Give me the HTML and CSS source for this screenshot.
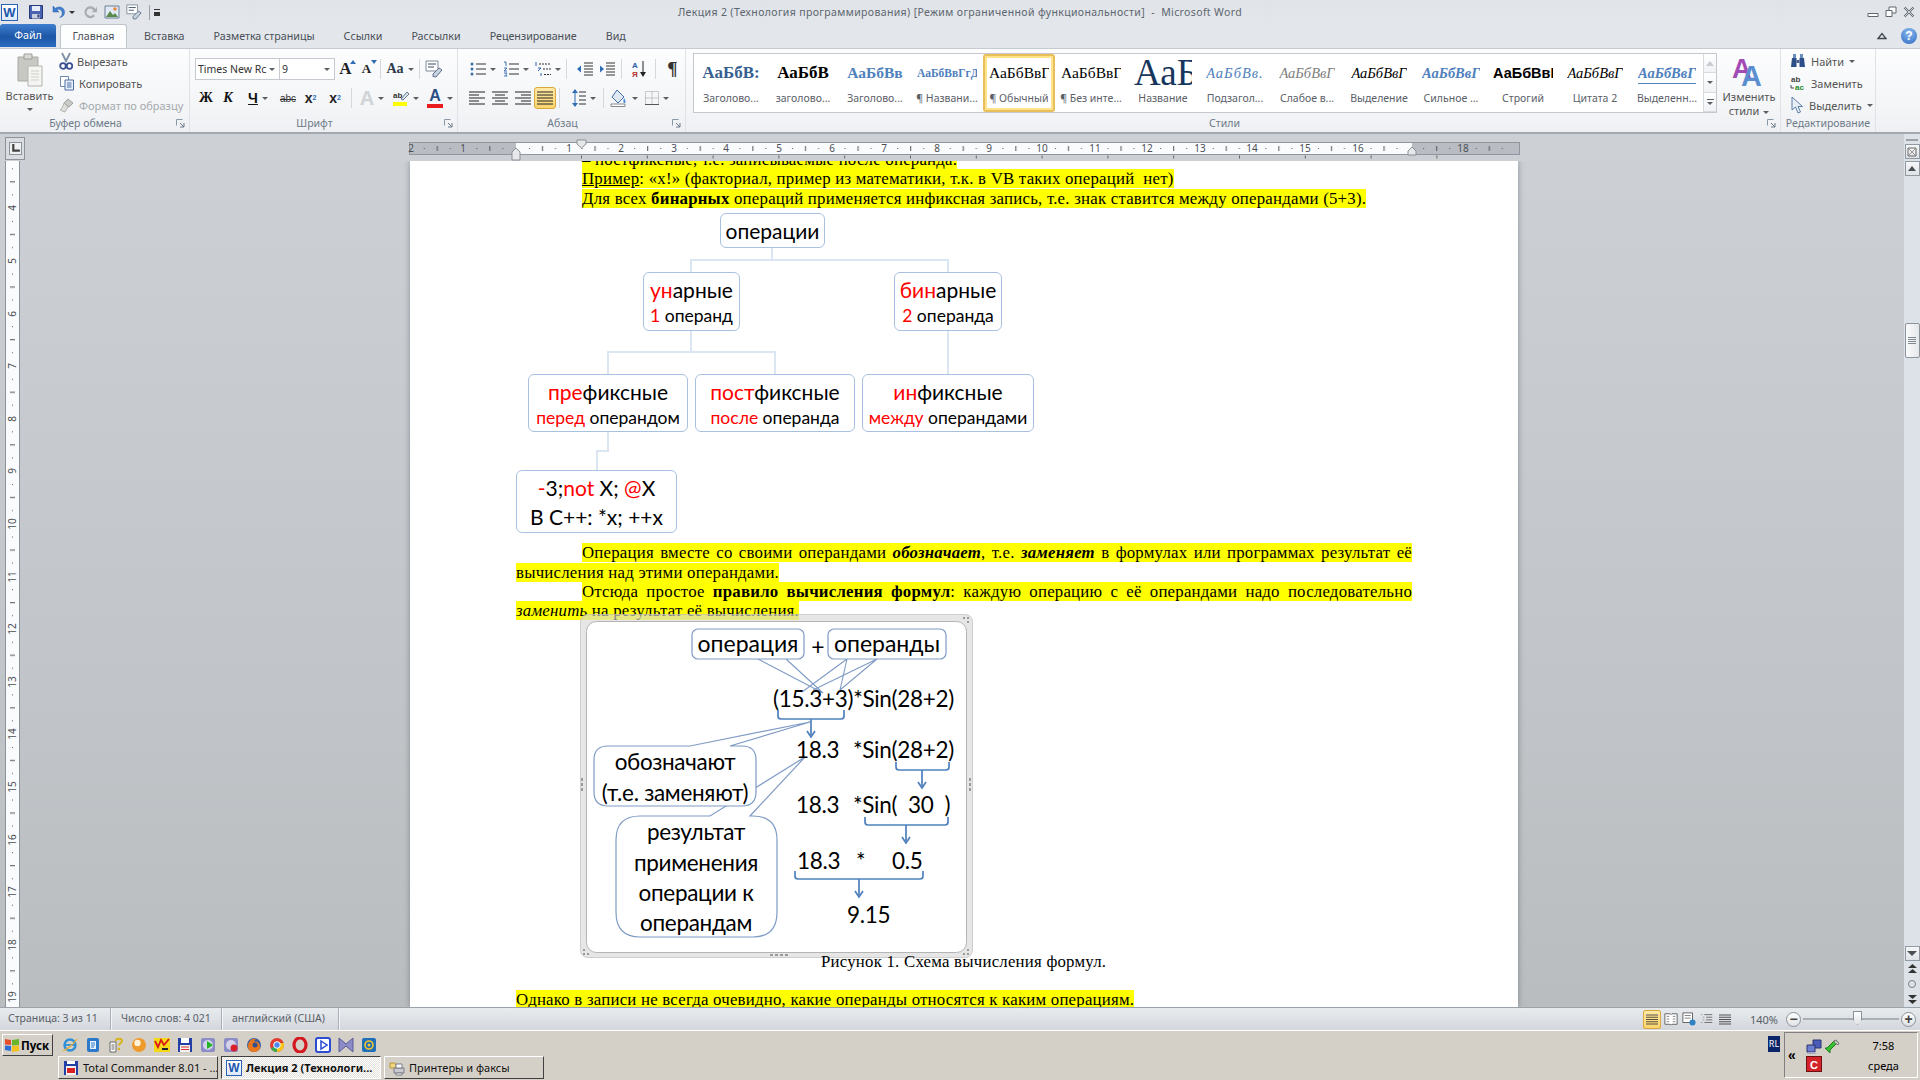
FILE: index.html
```html
<!DOCTYPE html>
<html lang="ru">
<head>
<meta charset="utf-8">
<title>Лекция 2 - Microsoft Word</title>
<link rel="stylesheet" href="styles.css">
</head>
<body>
<svg class="defs" width="0" height="0" aria-hidden="true">
  <defs>
    <symbol id="i-save" viewBox="0 0 16 16"><path d="M1.5 1.5h13v13h-13z" fill="#4a62b0" stroke="#27397c"/><path d="M4 2h8v5H4z" fill="#e8eef8"/><path d="M4 10h8v4.5H4z" fill="#c8cfdc"/><path d="M9.5 10.5h2v3h-2z" fill="#27397c"/></symbol>
    <symbol id="i-undo" viewBox="0 0 16 16"><path d="M3 2v6h6L6.8 5.8C9 4.5 12 5.5 12.2 9c.1 2-1 3.500-2.500 4.500 3.500-.5 5-3 4.800-5.800C14.200 3.500 9.500 1.500 5.300 4.300z" fill="#3f7fd0" stroke="#2a5ea8" stroke-width=".5"/></symbol>
    <symbol id="i-redo" viewBox="0 0 16 16"><path d="M13.500 5A6 6 0 1 0 13 12l-1.800-1.500A3.700 3.700 0 1 1 11.500 6.500L9.500 8.200h5.500V2.500z" fill="#a8adb3"/></symbol>
    <symbol id="i-pic" viewBox="0 0 16 16"><path d="M1 2h14v12H1z" fill="#dfeaf6" stroke="#6d7f96"/><path d="M2 13l4-6 3 4 2-2 3 4z" fill="#5c8a4a"/><circle cx="11" cy="5" r="1.800" fill="#e8893a"/></symbol>
    <symbol id="i-spell" viewBox="0 0 18 18"><path d="M1 1h12v10H1z" fill="#fff" stroke="#7d8a9a"/><path d="M3 4h8M3 7h6" stroke="#3a4a66"/><path d="M8 14l6-6 3 2-6 7-3-.5z" fill="#c9d3e0" stroke="#5e6f88"/></symbol>
    <symbol id="i-paste" viewBox="0 0 28 34"><path d="M2 4h20v24H2z" fill="#c7c7c3" stroke="#a9a9a4"/><path d="M8 1h8v5H8z" fill="#d8d8d4" stroke="#9e9e99"/><path d="M12 13h14v20H12z" fill="#f4f4f2" stroke="#b4b4b0"/><path d="M15 18h8M15 21h8M15 24h8M15 27h8" stroke="#d0cfca"/></symbol>
    <symbol id="i-cut" viewBox="0 0 14 18"><path d="M3 1l4.500 9M11 1L6.500 10" stroke="#7f8fa6" stroke-width="1.800" fill="none"/><circle cx="4" cy="14" r="2.800" fill="none" stroke="#3a4f8f" stroke-width="1.800"/><circle cx="10.500" cy="14" r="2.800" fill="none" stroke="#3a4f8f" stroke-width="1.800"/></symbol>
    <symbol id="i-copy" viewBox="0 0 16 16"><path d="M1.500 1.500h8v10h-8z" fill="#fff" stroke="#6f89ad"/><path d="M6 5h8.500v10H6z" fill="#e9f0fa" stroke="#4a6fa5"/><path d="M8 8h4.500M8 10h4.500M8 12h4.500" stroke="#4a6fa5"/></symbol>
    <symbol id="i-brush" viewBox="0 0 16 16"><path d="M9 2l5 4-4 4-5-4z" fill="#c9c9c6" stroke="#a3a3a0"/><path d="M5 6l4 4-3 5-5-2c2-1 3-4 4-7z" fill="#dedfdc" stroke="#b3b3b0"/></symbol>
    <symbol id="i-launch" viewBox="0 0 9 9"><path d="M.5.500h6M.5.500v6" stroke="#8a97a6" fill="none"/><path d="M8 8H4M8 8V4M8 8L4 4" stroke="#6b7a8b" fill="none"/></symbol>
    <symbol id="i-bul" viewBox="0 0 16 16"><circle cx="2" cy="3" r="1.500" fill="#3a6ea5"/><circle cx="2" cy="8" r="1.500" fill="#3a6ea5"/><circle cx="2" cy="13" r="1.500" fill="#3a6ea5"/><path d="M6 3h10M6 8h10M6 13h10" stroke="#333"/></symbol>
    <symbol id="i-num" viewBox="0 0 16 16"><path d="M1 1h2v4M1 7h3l-3 3h3M1 12h3l-1 1.500 1 1.500H1" stroke="#2a63ad" fill="none" stroke-width=".9"/><path d="M6 3h10M6 8h10M6 13h10" stroke="#333"/></symbol>
    <symbol id="i-multi" viewBox="0 0 16 16"><path d="M1 1v4M3 7h3l-3 3M6 12v3" stroke="#2a63ad" fill="none"/><path d="M4 3h12M8 8h8M9 13.500h7" stroke="#333" stroke-dasharray="2 1"/></symbol>
    <symbol id="i-out" viewBox="0 0 16 16"><path d="M7 2h9M7 5h9M7 8h9M7 11h9M7 14h9" stroke="#333"/><path d="M0 8l4-3.500v7z" fill="#2f6db5"/></symbol>
    <symbol id="i-in" viewBox="0 0 16 16"><path d="M7 2h9M7 5h9M7 8h9M7 11h9M7 14h9" stroke="#333"/><path d="M5 8L1 4.500v7z" fill="#2f6db5"/></symbol>
    <symbol id="i-sort" viewBox="0 0 16 18"><text x="1" y="8" class="sv-a">А</text><text x="1" y="17" class="sv-z">Я</text><path d="M12 1v13" stroke="#222"/><path d="M9 12l3 5 3-5z" fill="#222"/></symbol>
    <symbol id="i-left" viewBox="0 0 16 14"><path d="M0 1h16M0 4h10M0 7h16M0 10h10M0 13h16" stroke="#222"/></symbol>
    <symbol id="i-center" viewBox="0 0 16 14"><path d="M0 1h16M3 4h10M0 7h16M3 10h10M0 13h16" stroke="#222"/></symbol>
    <symbol id="i-right" viewBox="0 0 16 14"><path d="M0 1h16M6 4h10M0 7h16M6 10h10M0 13h16" stroke="#222"/></symbol>
    <symbol id="i-just" viewBox="0 0 16 14"><path d="M0 1h16M0 4h16M0 7h16M0 10h16M0 13h16" stroke="#222"/></symbol>
    <symbol id="i-space" viewBox="0 0 14 20"><path d="M3 1L0 5h6zM3 19L0 15h6z" fill="#2f6db5"/><path d="M3 5v10" stroke="#2f6db5"/><path d="M7 4h7M7 8h7M7 12h7M7 16h7" stroke="#333"/></symbol>
    <symbol id="i-fill" viewBox="0 0 18 18"><path d="M7 1l7 7-6 6-6-6z" fill="#dfe8f3" stroke="#3f6ea8"/><path d="M14 9c2 3 2 5 .5 5S13 12 14 9z" fill="#4a8fd8"/><path d="M1 15h14v2.500H1z" fill="#fff" stroke="#888"/></symbol>
    <symbol id="i-border" viewBox="0 0 14 14"><path d="M.5.500h13v13H.5zM7 .5v13M.5 7h13" fill="none" stroke="#9a9a9a" stroke-dasharray="1 1"/><path d="M0 13.500h14" stroke="#555"/></symbol>
    <symbol id="i-stylebig" viewBox="0 0 36 40"><text x="-1" y="28" class="sv-bigA">A</text><text x="9" y="37" class="sv-bigB">A</text></symbol>
    <symbol id="i-bino" viewBox="0 0 16 16"><path d="M2 5h4.500v9H1zM9.500 5H14l1 9H9.500z" fill="#2c4f8a"/><path d="M3 1h3v4H3zM10 1h3v4h-3z" fill="#6a8dbe"/><path d="M6.500 7h3v3h-3z" fill="#47618d"/></symbol>
    <symbol id="i-repl" viewBox="0 0 16 16"><text x="1" y="7" class="sv-ab">ab</text><text x="5" y="15" class="sv-ac">ac</text><path d="M1 10v3h3" stroke="#445" fill="none"/></symbol>
    <symbol id="i-sel" viewBox="0 0 14 18"><path d="M2 1v13l3.500-3 2.500 6 2.500-1-2.500-5.500H12.500z" fill="#e9eff7" stroke="#5c7fa8"/></symbol>
    <symbol id="i-ie" viewBox="0 0 16 16"><circle cx="8" cy="8" r="5.500" fill="none" stroke="#2f8fd8" stroke-width="2.400"/><path d="M3 8h10" stroke="#2f8fd8" stroke-width="1.800"/><path d="M1 14c3-1 10-6 14-12" stroke="#e6b13a" stroke-width="1.300" fill="none"/></symbol>
    <symbol id="i-doc" viewBox="0 0 16 16"><rect x="2" y="1" width="12" height="14" rx="2" fill="#2c78c9"/><path d="M5 4h6v8H5z" fill="#e8f3fd"/><path d="M6 6h4M6 8h4M6 10h3" stroke="#2c78c9"/></symbol>
    <symbol id="i-help" viewBox="0 0 16 16"><path d="M2 5h6v10H2z" fill="#fff" stroke="#666"/><path d="M3.500 8h3M3.500 10h3M3.500 12h3" stroke="#666"/><path d="M8 4c0-3 6-3 6 0 0 2-3 2-3 4.500" fill="none" stroke="#d9b21a" stroke-width="2"/><circle cx="11" cy="12" r="1.300" fill="#d9b21a"/></symbol>
    <symbol id="i-ball" viewBox="0 0 16 16"><circle cx="8" cy="8" r="7" fill="#ef9a2c"/><circle cx="6.500" cy="6" r="3.200" fill="#fff2d6"/></symbol>
    <symbol id="i-vv" viewBox="0 0 16 16"><path d="M0 1h16v14H0z" fill="#f6d818"/><path d="M1 4l3 6 3-7 3 5 5-6" stroke="#d81818" stroke-width="1.800" fill="none"/><path d="M8 12h6" stroke="#223" stroke-width="2"/></symbol>
    <symbol id="i-disk" viewBox="0 0 16 16"><path d="M1 1h14v14H1z" fill="#2440a8"/><path d="M4 1h8v5H4z" fill="#fff"/><path d="M3 8h10v7H3z" fill="#f3f3f3"/><path d="M4 10h8M4 12.500h8" stroke="#d33"/></symbol>
    <symbol id="i-wma1" viewBox="0 0 16 16"><rect x="1" y="1" width="14" height="14" rx="2" fill="#8c8cc8"/><circle cx="8" cy="8" r="5" fill="#d3d3ea"/><path d="M7 4l6 4-6 4z" fill="#22b322"/></symbol>
    <symbol id="i-wma2" viewBox="0 0 16 16"><rect x="1" y="1" width="14" height="14" rx="2" fill="#8c8cc8"/><circle cx="8" cy="8" r="5" fill="#d3d3ea"/><circle cx="11" cy="11" r="3.500" fill="#d81f2a"/></symbol>
    <symbol id="i-fox" viewBox="0 0 16 16"><circle cx="8" cy="8" r="7" fill="#3d5e9f"/><path d="M2 10c0-6 4-9 8-8-2 1-2 2-1 3 3-1 5 2 5 5s-3 5-6 5-6-2-6-5z" fill="#e8771d"/><circle cx="9" cy="8" r="2.500" fill="#304f8c"/></symbol>
    <symbol id="i-chrome" viewBox="0 0 16 16"><circle cx="8" cy="8" r="7" fill="#e23c31"/><path d="M8 8L1.900 11.500A7 7 0 0 0 8 15z" fill="#35a853"/><path d="M8 8v7A7 7 0 0 0 14.800 6H8z" fill="#f9c51d"/><circle cx="8" cy="8" r="3.300" fill="#4a8af0" stroke="#fff"/></symbol>
    <symbol id="i-opera" viewBox="0 0 16 16"><ellipse cx="8" cy="8" rx="6" ry="7" fill="none" stroke="#d51820" stroke-width="3.200"/></symbol>
    <symbol id="i-play" viewBox="0 0 16 16"><rect x="1" y="1" width="14" height="14" rx="2" fill="#fff" stroke="#2b4bd2" stroke-width="2"/><path d="M6 4l6 4-6 4z" fill="none" stroke="#2b4bd2" stroke-width="1.500"/></symbol>
    <symbol id="i-vs" viewBox="0 0 16 16"><path d="M1 1l7 6 7-6v14l-7-6-7 6z" fill="#8c8cc8" stroke="#5a5a9c"/></symbol>
    <symbol id="i-mail" viewBox="0 0 16 16"><rect x="1" y="1" width="14" height="14" rx="2" fill="#1f6fb6"/><circle cx="8" cy="8" r="4" fill="none" stroke="#f7c32e" stroke-width="1.600"/><circle cx="8" cy="8" r="1.500" fill="#f7c32e"/></symbol>
    <symbol id="i-tc" viewBox="0 0 16 16"><path d="M1 1h14v14H1z" fill="#2440a8"/><path d="M3 6h10v9H3z" fill="#f4f4f4"/><path d="M4 1h8v3H4z" fill="#fff"/><path d="M4 8h8v5H4z" fill="#d82222"/></symbol>
    <symbol id="i-print" viewBox="0 0 16 16"><path d="M1 3h5l1 2v3H1z" fill="#f0d682" stroke="#b6963c"/><path d="M5 8h10v5H5z" fill="#c9c9d1" stroke="#7a7a88"/><path d="M7 4h6v4H7zM7 13h6v2H7z" fill="#fff" stroke="#7a7a88"/></symbol>
    <symbol id="i-net" viewBox="0 0 16 16"><path d="M7 1h8v8H7z" fill="#4a5bb8" stroke="#2b356e"/><path d="M1 6h8v7H1z" fill="#6d7dd0" stroke="#2b356e"/><path d="M2 13h7l1 2H1z" fill="#a8a8c0"/></symbol>
    <symbol id="i-usb" viewBox="0 0 16 16"><path d="M1 9l5 5v-3l8-8-3-2-8 8H1z" fill="#35c02f" stroke="#1f7a1c"/><path d="M11 1l4 3-1 2-4-3z" fill="#d5d5d5" stroke="#777"/></symbol>
    <symbol id="i-flag" viewBox="0 0 16 16"><path d="M1 2l6 1v5l-6-.5z" fill="#e5502a"/><path d="M8 3l7-1v6l-7 .5z" fill="#6bb52a"/><path d="M1 8.500l6 .5v5l-6-1z" fill="#2e6fd6"/><path d="M8 9l7-.5V14l-7 1z" fill="#f4c01e"/></symbol>
    <symbol id="i-dblup" viewBox="0 0 11 11"><path d="M1 5l4.500-4L10 5zM1 10l4.500-4L10 10z" fill="#333"/></symbol>
    <symbol id="i-dbldn" viewBox="0 0 11 11"><path d="M1 1l4.500 4L10 1zM1 6l4.500 4L10 6z" fill="#333"/></symbol>
  </defs>
</svg>

<div class="window">
  <header class="titlebar">
    <div class="qat">
      <span class="wordlogo">W</span>
      <svg class="ic16 q-save"><use href="#i-save"/></svg>
      <svg class="ic16 q-undo"><use href="#i-undo"/></svg>
      <span class="ar q-ar"></span>
      <svg class="ic16 q-redo"><use href="#i-redo"/></svg>
      <svg class="ic16 q-pic"><use href="#i-pic"/></svg>
      <svg class="ic16 q-spell"><use href="#i-spell"/></svg>
      <span class="q-sep"></span>
      <span class="q-cust"></span>
    </div>
    <div class="wintitle">Лекция 2 (Технология программирования) [Режим ограниченной функциональности]  -  Microsoft Word</div>
    <div class="winctl">
      <svg class="wc" viewBox="0 0 12 12"><path d="M1 7.500h10v3H1z" fill="#fff" stroke="#5e6670"/></svg>
      <svg class="wc" viewBox="0 0 12 12"><path d="M4 1h7v6H4z" fill="#fff" stroke="#5e6670"/><path d="M1 4.500h6v6H1z" fill="#fff" stroke="#5e6670"/></svg>
      <svg class="wc" viewBox="0 0 12 12"><path d="M1.500 1.500l9 9M10.500 1.500l-9 9" stroke="#5e6670" stroke-width="2.200"/><path d="M1.500 1.500l9 9M10.500 1.500l-9 9" stroke="#fff" stroke-width=".7"/></svg>
    </div>
  </header>

  <nav class="tabs">
    <span class="tab-file">Файл</span>
    <span class="tab-home">Главная</span>
    <span class="tab">Вставка</span>
    <span class="tab">Разметка страницы</span>
    <span class="tab">Ссылки</span>
    <span class="tab">Рассылки</span>
    <span class="tab">Рецензирование</span>
    <span class="tab">Вид</span>
    <span class="tab-fill"></span>
    <svg class="collapse" viewBox="0 0 10 8"><path d="M1 6.500L5 1.500l4 5z" fill="none" stroke="#3e4650" stroke-width="1.300"/></svg>
    <span class="helpbtn">?</span>
  </nav>

  <section class="ribbon">
    <div class="group g-clip">
      <div class="g-body clip-body">
        <div class="paste">
          <svg class="paste-ic"><use href="#i-paste"/></svg>
          <span class="paste-t">Вставить</span>
          <span class="ar"></span>
        </div>
        <div class="clip-list">
          <div class="clip-row"><svg class="ic-cut"><use href="#i-cut"/></svg><span>Вырезать</span></div>
          <div class="clip-row"><svg class="ic16"><use href="#i-copy"/></svg><span>Копировать</span></div>
          <div class="clip-row off"><svg class="ic16"><use href="#i-brush"/></svg><span>Формат по образцу</span></div>
        </div>
      </div>
      <div class="g-label lab-l">Буфер обмена<svg class="launch"><use href="#i-launch"/></svg></div>
    </div>

    <div class="group g-font">
      <div class="g-body rows f-body">
        <div class="row">
          <div class="combo c-font"><span>Times New Rc</span><i class="ar"></i></div>
          <div class="combo c-size"><span>9</span><i class="ar"></i></div>
          <span class="tb w21 grow">A<sup class="tri-u"></sup></span>
          <span class="tb w21 shrink">A<sup class="tri-d"></sup></span>
          <span class="sep"></span>
          <span class="tb w32 aa">Aa<i class="ar"></i></span>
          <span class="sep"></span>
          <span class="tb w22"><svg class="ic18"><use href="#i-spell"/></svg></span>
        </div>
        <div class="row">
          <span class="tb w22 fb">Ж</span>
          <span class="tb w22 fi">К</span>
          <span class="tb w38 fu"><u>Ч</u><i class="ar"></i></span>
          <span class="tb w22 fs">abc</span>
          <span class="tb w23 fx">x<sub>2</sub></span>
          <span class="tb w26 fx">x<sup>2</sup></span>
          <span class="sep"></span>
          <span class="tb w34 fa-grey">A<i class="ar"></i></span>
          <span class="tb w34"><svg class="ic16" viewBox="0 0 16 16"><text x="0" y="8" class="sv-ab2">ab</text><path d="M8 9l6-7 2 2-6 6z" fill="#dbe3ec" stroke="#66788e"/><path d="M0 12h14v4H0z" fill="#ff0"/></svg><i class="ar"></i></span>
          <span class="tb w34"><span class="a-red">A</span><i class="ar"></i></span>
        </div>
      </div>
      <div class="g-label lab-l">Шрифт<svg class="launch"><use href="#i-launch"/></svg></div>
    </div>

    <div class="group g-para">
      <div class="g-body rows p-body">
        <div class="row">
          <span class="tb w33"><svg class="ic16"><use href="#i-bul"/></svg><i class="ar"></i></span>
          <span class="tb w34"><svg class="ic16"><use href="#i-num"/></svg><i class="ar"></i></span>
          <span class="tb w30"><svg class="ic16"><use href="#i-multi"/></svg><i class="ar"></i></span>
          <span class="sep"></span>
          <span class="tb w22 ml4"><svg class="ic16"><use href="#i-out"/></svg></span>
          <span class="tb w22"><svg class="ic16"><use href="#i-in"/></svg></span>
          <span class="sep"></span>
          <span class="tb w27"><svg class="ic-sort"><use href="#i-sort"/></svg></span>
          <span class="sep"></span>
          <span class="tb w27 pilcrow">¶</span>
        </div>
        <div class="row">
          <span class="tb w22"><svg class="ic-al"><use href="#i-left"/></svg></span>
          <span class="tb w23"><svg class="ic-al"><use href="#i-center"/></svg></span>
          <span class="tb w23"><svg class="ic-al"><use href="#i-right"/></svg></span>
          <span class="tb w22 active"><svg class="ic-al"><use href="#i-just"/></svg></span>
          <span class="sep"></span>
          <span class="tb w33 ml4"><svg class="ic-sp"><use href="#i-space"/></svg><i class="ar"></i></span>
          <span class="sep"></span>
          <span class="tb w34"><svg class="ic18"><use href="#i-fill"/></svg><i class="ar"></i></span>
          <span class="tb w32"><svg class="ic-b"><use href="#i-border"/></svg><i class="ar"></i></span>
        </div>
      </div>
      <div class="g-label lab-l">Абзац<svg class="launch"><use href="#i-launch"/></svg></div>
    </div>

    <div class="group g-styles">
      <div class="g-body styles-body">
        <div class="gallery">
          <div class="st"><div class="pv s1">АаБбВ:</div><div class="lb">Заголово...</div></div>
          <div class="st"><div class="pv s2">АаБбВ</div><div class="lb">заголово...</div></div>
          <div class="st"><div class="pv s3">АаБбВв</div><div class="lb">Заголово...</div></div>
          <div class="st"><div class="pv s4">АаБбВвГгД</div><div class="lb">¶ Названи...</div></div>
          <div class="st on"><div class="pv s5">АаБбВвГ</div><div class="lb">¶ Обычный</div></div>
          <div class="st"><div class="pv s5">АаБбВвГ</div><div class="lb">¶ Без инте...</div></div>
          <div class="st"><div class="pv s7">АаБ</div><div class="lb">Название</div></div>
          <div class="st"><div class="pv s8">АаБбВв.</div><div class="lb">Подзагол...</div></div>
          <div class="st"><div class="pv s9">АаБбВвГ</div><div class="lb">Слабое в...</div></div>
          <div class="st"><div class="pv s10">АаБбВвГ</div><div class="lb">Выделение</div></div>
          <div class="st"><div class="pv s11">АаБбВвГ</div><div class="lb">Сильное ...</div></div>
          <div class="st"><div class="pv s12">АаБбВвГ</div><div class="lb">Строгий</div></div>
          <div class="st"><div class="pv s10">АаБбВвГ</div><div class="lb">Цитата 2</div></div>
          <div class="st"><div class="pv s14"><span>АаБбВвГ</span></div><div class="lb">Выделенн...</div></div>
          <div class="gal-scroll">
            <span class="gs"><i class="tri-up off-tri"></i></span>
            <span class="gs"><i class="ar"></i></span>
            <span class="gs"><b class="gs-line"></b><i class="ar"></i></span>
          </div>
        </div>
        <div class="chstyle">
          <svg class="ic-chs"><use href="#i-stylebig"/></svg>
          <span>Изменить</span>
          <span>стили<i class="ar"></i></span>
        </div>
      </div>
      <div class="g-label styles-label">Стили<svg class="launch"><use href="#i-launch"/></svg></div>
    </div>

    <div class="group g-edit">
      <div class="g-body edit-list">
        <div class="clip-row"><svg class="ic16"><use href="#i-bino"/></svg><span>Найти</span><i class="ar"></i></div>
        <div class="clip-row"><svg class="ic16"><use href="#i-repl"/></svg><span>Заменить</span></div>
        <div class="clip-row"><svg class="ic-sel"><use href="#i-sel"/></svg><span>Выделить</span><i class="ar"></i></div>
      </div>
      <div class="g-label">Редактирование</div>
    </div>
  </section>

  <main class="workspace">
    <div class="tabsel"><svg viewBox="0 0 10 10" class="tabsel-i"><path d="M2 1h2v5h5v2H2z" fill="#444"/></svg></div>
    <div class="hruler-cell">
      <svg class="hruler" viewBox="0 -3 1111 22" width="1111" height="22">
        <defs>
          <pattern id="rt" width="52.6" height="13" patternUnits="userSpaceOnUse" patternTransform="translate(107 0)">
            <rect x="13" y="6" width="1" height="1" fill="#555"/>
            <rect x="26" y="4" width="1" height="5" fill="#555"/>
            <rect x="39" y="6" width="1" height="1" fill="#555"/>
          </pattern>
          <pattern id="rtab" width="65.8" height="3" patternUnits="userSpaceOnUse" patternTransform="translate(172 0)">
            <rect x="0" y="0" width="1" height="3" fill="#666"/>
          </pattern>
        </defs>
        <rect x="0" y="0" width="1111" height="13" fill="#b9bdc3"/>
        <rect x="107" y="0" width="896" height="13" fill="#fafbfc"/>
        <rect x="0" y="0" width="1111" height="13" fill="url(#rt)"/>
        <rect x=".5" y=".5" width="1110" height="12" fill="none" stroke="#8f969e"/>
        <rect x="172" y="13.500" width="900" height="3" fill="url(#rtab)"/>
        <g class="rn" text-anchor="middle">
          <text x="2" y="10">2</text><text x="54" y="10">1</text>
          <text x="160" y="10">1</text><text x="212" y="10">2</text><text x="265" y="10">3</text><text x="317" y="10">4</text><text x="370" y="10">5</text><text x="423" y="10">6</text><text x="475" y="10">7</text><text x="528" y="10">8</text><text x="580" y="10">9</text><text x="633" y="10">10</text><text x="686" y="10">11</text><text x="738" y="10">12</text><text x="791" y="10">13</text><text x="843" y="10">14</text><text x="896" y="10">15</text><text x="949" y="10">16</text><text x="1054" y="10">18</text>
        </g>
        <path d="M168 -2h9v4l-4.500 4-4.500-4z" fill="#e6e8ea" stroke="#8a8f95"/>
        <path d="M103 10l4-4 4 4v8h-8z" fill="#e6e8ea" stroke="#8a8f95"/>
        <path d="M1007 13V9l-4-4-4 4v4z" fill="#e6e8ea" stroke="#8a8f95"/>
      </svg>
    </div>
    <div class="rtoggle"><span class="splitbox"></span><span class="sbtn"><svg viewBox="0 0 10 10" class="rt-i"><path d="M1 1h8v8H1z" fill="none" stroke="#666"/><path d="M2 2l6 6M8 2L2 8" stroke="#999"/></svg></span></div>

    <div class="vruler">
      <svg class="vr" viewBox="0 0 13 846" width="13" height="846">
        <defs>
          <pattern id="vt" width="13" height="52.6" patternUnits="userSpaceOnUse" patternTransform="translate(0 -5.600)">
            <rect x="6" y="13" width="1" height="1" fill="#555"/>
            <rect x="4" y="26" width="5" height="1" fill="#555"/>
            <rect x="6" y="39" width="1" height="1" fill="#555"/>
          </pattern>
        </defs>
        <rect width="13" height="846" fill="#fafbfc"/>
        <rect width="13" height="846" fill="url(#vt)"/>
        <g class="rn" text-anchor="middle">
          <text transform="translate(10 47) rotate(-90)">4</text>
          <text transform="translate(10 100) rotate(-90)">5</text>
          <text transform="translate(10 153) rotate(-90)">6</text>
          <text transform="translate(10 205) rotate(-90)">7</text>
          <text transform="translate(10 258) rotate(-90)">8</text>
          <text transform="translate(10 310) rotate(-90)">9</text>
          <text transform="translate(10 363) rotate(-90)">10</text>
          <text transform="translate(10 416) rotate(-90)">11</text>
          <text transform="translate(10 468) rotate(-90)">12</text>
          <text transform="translate(10 521) rotate(-90)">13</text>
          <text transform="translate(10 573) rotate(-90)">14</text>
          <text transform="translate(10 626) rotate(-90)">15</text>
          <text transform="translate(10 679) rotate(-90)">16</text>
          <text transform="translate(10 731) rotate(-90)">17</text>
          <text transform="translate(10 784) rotate(-90)">18</text>
          <text transform="translate(10 836) rotate(-90)">19</text>
        </g>
      </svg>
    </div>

    <div class="docarea">
      <article class="page">
        <p class="ln ind"><mark>– постфиксные, т.е. записываемые после операнда.</mark></p>
        <p class="ln ind"><mark><u>Пример</u>: «x!» (факториал, пример из математики, т.к. в VB таких операций  нет)</mark></p>
        <p class="ln ind"><mark>Для всех <b>бинарных</b> операций применяется инфиксная запись, т.е. знак ставится между операндами (5+3).</mark></p>

        <div class="diagram">
          <svg class="dg-lines" viewBox="0 0 896 336" width="896" height="336">
            <path d="M256 40v12M175 64V52H432V64M175 123v21M92 166v-22H259v22M432 123v43M92 224v19H81v19" fill="none" stroke="#dce6f2" stroke-width="2"/>
          </svg>
          <div class="node n-ops"><span class="big">операции</span></div>
          <div class="node n-un"><span class="big"><em>ун</em>арные</span><span class="small"><em>1</em> операнд</span></div>
          <div class="node n-bin"><span class="big"><em>бин</em>арные</span><span class="small"><em>2</em> операнда</span></div>
          <div class="node n-pre"><span class="big"><em>пре</em>фиксные</span><span class="small"><em>перед</em> операндом</span></div>
          <div class="node n-post"><span class="big"><em>пост</em>фиксные</span><span class="small"><em>после</em> операнда</span></div>
          <div class="node n-in"><span class="big"><em>ин</em>фиксные</span><span class="small"><em>между</em> операндами</span></div>
          <div class="node n-ex"><span class="big"><em>-</em>3;<em>not</em> X; <em>@</em>X</span><span class="big">В С++: *x; ++x</span></div>
        </div>

        <p class="ln para"><mark>Операция вместе со своими операндами <b><i>обозначает</i></b>, т.е. <b><i>заменяет</i></b> в формулах или программах результат её вычисления над этими операндами.</mark></p>
        <p class="ln para"><mark>Отсюда простое <b>правило вычисления формул</b>: каждую операцию с её операндами надо последовательно <i>заменить</i> на результат её вычисления.</mark></p>

        <figure class="fig">
          <svg class="fig-svg" viewBox="0 0 393 344" width="393" height="344">
            <rect class="fr-out" x=".5" y=".5" width="392" height="343" rx="7"/>
            <rect class="fr-in" x="6.500" y="7.500" width="380" height="331" rx="10"/>
            <g class="handles"><path d="M1 164h2v3H1zM1 169h2v3H1zM1 174h2v3H1zM389 164h2v3h-2zM389 169h2v3h-2zM389 174h2v3h-2zM190 340h3v2h-3zM195 340h3v2h-3zM200 340h3v2h-3zM205 340h3v2h-3zM383 3h2v2h-2zM387 3h2v2h-2zM387 7h2v2h-2zM3 339h2v2H3zM7 339h2v2H7zM3 335h2v2H3zM383 339h2v2h-2zM387 339h2v2h-2zM387 335h2v2h-2z"/></g>
            <g class="wedge">
              <path d="M178 45L243 79M206 45L243 79M267 45L222 78M267 45L260 76M297 45L233 76M297 45L260 76"/>
            </g>
            <rect class="cbox" x="112" y="15" width="112" height="30" rx="6"/>
            <rect class="cbox" x="248" y="15" width="118" height="30" rx="6"/>
            <path class="cbox" d="M60 202H130L225 143L170 202H173Q197 202 197 226V298Q197 323 173 323H60Q36 323 36 298V226Q36 202 60 202Z"/>
            <path class="cbox" d="M28 132H110L230 108L150 132H162Q176 132 176 146V178Q176 192 162 192H28Q14 192 14 178V146Q14 132 28 132Z"/>
            <g class="brace">
              <path d="M198 96v6q0 3 3 3h60q3 0 3-3v-6M231 105v16"/>
              <path d="M316 148v5q0 3 3 3h47q3 0 3-3v-5M342 156v16"/>
              <path d="M285 203v5q0 3 3 3h77q3 0 3-3v-5M326 211v16"/>
              <path d="M215 257v5q0 3 3 3h122q3 0 3-3v-5M279 265v16"/>
              <path d="M227 117l4 6 4-6M338 168l4 6 4-6M322 223l4 6 4-6M275 277l4 6 4-6"/>
            </g>
            <g class="ft ft-top">
              <text x="168" y="38" text-anchor="middle">операция</text>
              <text x="238" y="41" text-anchor="middle">+</text>
              <text x="307" y="38" text-anchor="middle">операнды</text>
            </g>
            <g class="ft">
              <text x="193" y="93">(15.3+3)*Sin(28+2)</text>
              <text x="216" y="144">18.3</text><text x="273" y="144">*Sin(28+2)</text>
              <text x="216" y="199">18.3</text><text x="273" y="199" class="pre">*Sin(  30  )</text>
              <text x="217" y="255">18.3</text><text x="276" y="255">*</text><text x="312" y="255">0.5</text>
              <text x="267" y="309">9.15</text>
              <text x="95" y="156" text-anchor="middle">обозначают</text>
              <text x="95" y="187" text-anchor="middle">(т.е. заменяют)</text>
              <text x="116" y="226" text-anchor="middle">результат</text>
              <text x="116" y="257" text-anchor="middle">применения</text>
              <text x="116" y="287" text-anchor="middle">операции к</text>
              <text x="116" y="317" text-anchor="middle">операндам</text>
            </g>
          </svg>
        </figure>
        <p class="ln caption">Рисунок 1. Схема вычисления формул.</p>
        <p class="ln blank">&nbsp;</p>
        <p class="ln"><mark>Однако в записи не всегда очевидно, какие операнды относятся к каким операциям.</mark></p>
      </article>
    </div>

    <aside class="scrollbar">
      <span class="sbtn"><i class="tri-up"></i></span>
      <div class="sb-track"><span class="sb-thumb"><i></i><i></i><i></i><i></i></span></div>
      <span class="sbtn"><i class="ar sb-ar"></i></span>
      <svg class="sb-nav"><use href="#i-dblup"/></svg>
      <span class="sb-dot"></span>
      <svg class="sb-nav"><use href="#i-dbldn"/></svg>
    </aside>
  </main>

  <footer class="statusbar">
    <span class="sb-item s-a">Страница: 3 из 11</span>
    <span class="sb-item s-b">Число слов: 4 021</span>
    <span class="sb-item s-c">английский (США)</span>
    <span class="tab-fill"></span>
    <span class="vbtn on"><svg class="ic-al"><use href="#i-just"/></svg></span>
    <span class="vbtn"><svg class="ic16" viewBox="0 0 16 16"><path d="M1 2h6l1 1 1-1h6v12H9l-1 1-1-1H1z" fill="#fff" stroke="#555"/><path d="M3 5h3M3 8h3M3 11h3M10 5h3M10 8h3M10 11h3" stroke="#777"/></svg></span>
    <span class="vbtn"><svg class="ic16" viewBox="0 0 16 16"><path d="M1 1h11v11H1z" fill="#fff" stroke="#555"/><path d="M3 4h7M3 7h7" stroke="#777"/><circle cx="12" cy="12" r="3.500" fill="#2f83c5"/></svg></span>
    <span class="vbtn"><svg class="ic16" viewBox="0 0 16 16"><path d="M5 3h9M7 6h7M7 9h7M5 12h9" stroke="#666"/><path d="M1 3h2M1 12h2M3 6h2M3 9h2" stroke="#999"/></svg></span>
    <span class="vbtn"><svg class="ic-al"><use href="#i-just"/></svg></span>
    <span class="zoompct">140%</span>
    <span class="zbtn">−</span>
    <span class="zslider"><i class="zthumb"></i></span>
    <span class="zbtn zplus">+</span>
  </footer>

  <div class="taskbar">
    <div class="task-top">
      <button class="startbtn"><svg class="ic16"><use href="#i-flag"/></svg>Пуск</button>
      <div class="quick">
        <svg class="ic16"><use href="#i-ie"/></svg>
        <svg class="ic16"><use href="#i-doc"/></svg>
        <svg class="ic16"><use href="#i-help"/></svg>
        <svg class="ic16"><use href="#i-ball"/></svg>
        <svg class="ic16"><use href="#i-vv"/></svg>
        <svg class="ic16"><use href="#i-disk"/></svg>
        <svg class="ic16"><use href="#i-wma1"/></svg>
        <svg class="ic16"><use href="#i-wma2"/></svg>
        <svg class="ic16"><use href="#i-fox"/></svg>
        <svg class="ic16"><use href="#i-chrome"/></svg>
        <svg class="ic16"><use href="#i-opera"/></svg>
        <svg class="ic16"><use href="#i-play"/></svg>
        <svg class="ic16"><use href="#i-vs"/></svg>
        <svg class="ic16"><use href="#i-mail"/></svg>
      </div>
    </div>
    <div class="task-btns">
      <button class="tbtn"><svg class="ic16"><use href="#i-tc"/></svg><span>Total Commander 8.01 - ...</span></button>
      <button class="tbtn act"><span class="wordlogo small">W</span><span>Лекция 2 (Технологи...</span></button>
      <button class="tbtn"><svg class="ic16"><use href="#i-print"/></svg><span>Принтеры и факсы</span></button>
    </div>
    <span class="lang">RL</span>
    <div class="tray">
      <span class="chev">«</span>
      <div class="tray-ic">
        <svg class="ic16"><use href="#i-net"/></svg>
        <svg class="ic16"><use href="#i-usb"/></svg>
        <span class="redc">C</span>
      </div>
      <div class="clock"><span>7:58</span><span>среда</span></div>
    </div>
  </div>
</div>
</body>
</html>
```
FILE: styles.css
```css
* { box-sizing: border-box; }
html, body { margin: 0; padding: 0; height: 100%; overflow: hidden; }
body { font-family: "Noto Sans", "Open Sans", sans-serif; font-size: 11px; color: #444; background: #d4d0c8; }
.defs { position: absolute; }
.window { width: 1920px; height: 1080px; display: flex; flex-direction: column; }
p { margin: 0; }
svg { display: block; flex: none; }

.ic16 { width: 16px; height: 16px; }
.ic18 { width: 18px; height: 18px; }
.ic-cut { width: 14px; height: 18px; }
.ic-sort { width: 16px; height: 18px; }
.ic-al { width: 16px; height: 14px; }
.ic-sp { width: 14px; height: 20px; }
.ic-b { width: 14px; height: 14px; }
.ic-sel { width: 14px; height: 18px; }
.sv-a { font: bold 8px "Liberation Sans", sans-serif; fill: #2a5ea8; }
.sv-z { font: bold 8px "Liberation Sans", sans-serif; fill: #b03030; }
.sv-ab { font: bold 8px "Liberation Sans", sans-serif; fill: #444; }
.sv-ab2 { font: bold 8px "Liberation Sans", sans-serif; fill: #333; }
.sv-ac { font: bold 8px "Liberation Sans", sans-serif; fill: #1c8a2c; }
.sv-bigA { font: bold 30px "Liberation Sans", sans-serif; fill: #a24bb5; }
.sv-bigB { font: bold 32px "Liberation Sans", sans-serif; fill: #5b8fd0; }

.ar { display: inline-block; width: 0; height: 0; border: 3px solid transparent; border-top: 3px solid #5a5f66; border-bottom: 0; flex: none; }
.tri-up { display: block; width: 0; height: 0; border: 4px solid transparent; border-bottom: 5px solid #4a4f55; border-top: 0; }
.off-tri { border-bottom-color: #c8ccd1; }

/* title bar */
.titlebar { height: 24px; display: flex; align-items: center; position: relative; background: linear-gradient(#e0e3e7, #e3e6ea); }
.qat { display: flex; align-items: center; width: 170px; }
.wordlogo { width: 17px; height: 17px; margin-left: 1px; background: linear-gradient(#fff, #dce8f8); border: 1px solid #2a62b5; color: #1c57ad; font: bold 13px/15px "Liberation Sans", sans-serif; text-align: center; }
.q-save { margin-left: 10px; }
.q-undo { margin-left: 6px; }
.q-ar { margin-left: 3px; border-top-color: #333; }
.q-redo { margin-left: 7px; }
.q-pic { margin-left: 6px; }
.q-spell { margin-left: 6px; }
.q-sep { width: 1px; height: 15px; background: #9aa2ab; margin-left: 7px; }
.q-cust { width: 6px; height: 7px; margin-left: 4px; border-top: 1px solid #333; border-bottom: 4px solid #333; }
.wintitle { flex: 1; text-align: center; white-space: pre; font-size: 10.5px; color: #5d6670; padding-right: 117px; letter-spacing: .035em; }
.winctl { display: flex; gap: 6px; width: 50px; margin-right: 3px; }
.wc { width: 12px; height: 12px; }

/* tabs */
.tabs { height: 24px; display: flex; align-items: stretch; gap: 29px; background: #e3e6ea; position: relative; z-index: 1; font-size: 10.700px; }
.tab { line-height: 24px; color: #4a5058; }
.tab-file { width: 56px; margin-right: -25px; text-align: center; line-height: 23px; height: 23px; color: #fff; background: linear-gradient(#3f7fd0, #1d56a6 55%, #2a6cc0); border-radius: 3px 3px 0 0; }
.tab-home { width: 67px; margin-right: -12px; text-align: center; line-height: 23px; height: 24px; background: linear-gradient(#fff, #fbfcfd); border: 1px solid #bfc5cb; border-bottom: 0; border-radius: 3px 3px 0 0; color: #4a5058; }
.tab-fill { flex: 1; }
.collapse { width: 10px; height: 8px; align-self: center; margin-right: -15px; }
.helpbtn { width: 16px; height: 16px; align-self: center; margin-right: 3px; border-radius: 50%; background: radial-gradient(circle at 50% 30%, #8fbcf0, #2c69c2); color: #fff; font: bold 12px/16px "Liberation Sans", sans-serif; text-align: center; }

/* ribbon */
.ribbon { height: 86px; display: flex; background: linear-gradient(#fdfdfe, #f3f5f7 70%, #eef0f3); border-top: 1px solid #c6cbd1; border-bottom: 2px solid #a3a9b0; }
.group { display: flex; flex-direction: column; border-right: 1px solid #dfe3e7; position: relative; }
.g-body { flex: 1; min-height: 0; }
.g-label { height: 15px; line-height: 15px; text-align: center; color: #6d7a88; font-size: 10.5px; position: relative; flex: none; margin-bottom: 1px; }
.lab-l { padding-right: 18px; }
.launch { position: absolute; right: 4px; top: 3px; width: 9px; height: 9px; }
.g-clip { width: 190px; }
.g-font { width: 268px; }
.g-para { width: 228px; }
.g-styles { width: 1095px; }
.g-edit { width: 95px; }

.clip-body { display: flex; }
.paste { width: 59px; display: flex; flex-direction: column; align-items: center; padding-top: 4px; }
.paste-ic { width: 28px; height: 34px; margin-bottom: 2px; }
.paste-t { line-height: 14px; color: #555; margin-top: 0; }
.paste .ar { margin-top: 5px; }
.clip-list, .edit-list { display: flex; flex-direction: column; padding-top: 1px; }
.clip-row { height: 22.500px; display: flex; align-items: center; gap: 4px; color: #555; white-space: nowrap; }
.clip-row.off { color: #a6a9ad; }
.clip-list { margin-left: 0; }
.edit-list { padding-left: 9px; }
.edit-list .clip-row { gap: 5px; }

.rows { display: flex; flex-direction: column; gap: 7px; padding-top: 9px; }
.f-body { padding-left: 5px; }
.p-body { padding-left: 8px; }
.row { display: flex; align-items: center; height: 22px; }
.combo { height: 22px; display: flex; align-items: center; justify-content: space-between; border: 1px solid #c5cad0; background: #fff; color: #333; padding: 0 4px 0 2px; font-family: "Noto Sans", sans-serif; font-size: 10.5px; }
.c-font { width: 85px; overflow: hidden; white-space: nowrap; }
.c-font span { width: 70px; overflow: hidden; }
.c-size { width: 56px; margin-left: -1px; }
.tb { display: flex; align-items: center; justify-content: center; gap: 4px; height: 22px; flex: none; color: #222; font-family: "Liberation Serif", serif; position: relative; }
.w21 { width: 21px; } .w22 { width: 22px; } .w23 { width: 23px; } .w24 { width: 24px; } .w26 { width: 26px; } .w27 { width: 27px; } .w30 { width: 30px; } .w32 { width: 32px; } .w33 { width: 33px; } .w34 { width: 34px; } .w38 { width: 38px; }
.ml4 { margin-left: 4px; }
.sep { width: 1px; height: 20px; background: #d5d9de; flex: none; margin: 0 3px; }
.grow { font-size: 17px; font-weight: bold; margin-left: 0; }
.shrink { font-size: 13px; font-weight: bold; }
.tri-u, .tri-d { display: block; width: 0; height: 0; border: 3px solid transparent; position: absolute; right: 0; top: 2px; }
.tri-u { border-bottom: 4px solid #2f6db5; border-top: 0; }
.tri-d { border-top: 4px solid #2f6db5; border-bottom: 0; }
.aa { font-size: 14px; font-weight: bold; color: #2c3a4a; }
.fb, .fi, .fu { font-size: 14px; font-weight: bold; font-family: "Liberation Sans", sans-serif; color: #111; }
.fb { font-family: "Liberation Serif", serif; }
.fi { font-style: italic; font-family: "Liberation Serif", serif; }
.fs { font: 10px "Liberation Sans", sans-serif; text-decoration: line-through; color: #333; }
.fx { font: bold 14px "Liberation Sans", sans-serif; gap: 0; color: #222; }
.fx sub, .fx sup { font-size: 7px; color: #2f6db5; line-height: 0; }
.fa-grey { font: bold 20px "Liberation Sans", sans-serif; color: #d0d3d6; }
.a-red { display: block; width: 16px; text-align: center; font: bold 16px/16px "Liberation Sans", sans-serif; color: #2a4f86; border-bottom: 4px solid #e81c1c; }
.pilcrow { font-size: 19px; font-weight: bold; color: #333; }
.tb.active { background: linear-gradient(#ffe9a6, #fdd56e); border: 1px solid #d9a83c; border-radius: 3px; }

.styles-body { display: flex; }
.gallery { width: 1024px; height: 60px; margin: 4px 0 0 7px; display: flex; background: #fff; border: 1px solid #c4c8cd; padding-left: 1px; }
.st { width: 72px; height: 58px; display: flex; flex-direction: column; align-items: center; overflow: hidden; flex: none; padding: 2px 1px; }
.st.on { border: 2px solid #e8bf5b; box-shadow: inset 0 0 0 2px #ffe28a; border-radius: 3px; padding: 0 1px; }
.pv { height: 35px; line-height: 34px; white-space: nowrap; color: #111; font-family: "Liberation Serif", serif; overflow: hidden; max-width: 60px; flex: none; }
.lb { line-height: 14px; color: #5b6068; white-space: nowrap; font-size: 10.5px; }
.s1 { font-size: 17px; font-weight: bold; color: #365f91; }
.s2 { font-size: 17px; font-weight: bold; color: #000; }
.s3 { font-size: 15.500px; font-weight: bold; color: #4f81bd; }
.s4 { font-size: 11.500px; font-weight: bold; color: #4f81bd; }
.s5 { font-size: 15.500px; color: #000; }
.s7 { font-size: 37px; color: #17365d; max-width: 58px; }
.s8 { font-size: 14.500px; font-style: italic; color: #4f81bd; letter-spacing: 1px; }
.s9 { font-size: 14.500px; font-style: italic; color: #808080; }
.s10 { font-size: 14.500px; font-style: italic; color: #000; }
.s11 { font-size: 14.500px; font-style: italic; font-weight: bold; color: #4f81bd; }
.s12 { font-size: 14.500px; font-weight: bold; color: #000; font-family: "Liberation Sans", sans-serif; }
.s14 { font-size: 14.500px; font-style: italic; font-weight: bold; color: #4f81bd; }
.s14 span { border-bottom: 1px solid #4f81bd; padding-bottom: 2px; }
.gal-scroll { width: 13px; margin-left: 0; display: flex; flex-direction: column; flex: none; border-left: 1px solid #d7dbe0; }
.gs { flex: 1; display: flex; flex-direction: column; align-items: center; justify-content: center; gap: 2px; border-bottom: 1px solid #d7dbe0; background: linear-gradient(#fff, #f0f2f5); }
.gs-line { width: 7px; height: 1px; background: #5a5f66; }
.chstyle { width: 62px; margin-left: 1px; display: flex; flex-direction: column; align-items: center; line-height: 14px; color: #555; padding-top: 4px; }
.chstyle .ar { margin-left: 4px; vertical-align: middle; }
.ic-chs { width: 36px; height: 36px; margin-bottom: 1px; }
.styles-label { padding-right: 17px; }

/* workspace */
.workspace { flex: 1; min-height: 0; display: grid; grid-template-columns: 26px 1878px 16px; grid-template-rows: 27px 846px; background: linear-gradient(#cdd1d6, #babdc0); overflow: hidden; }
.tabsel { width: 20px; height: 23px; margin: 3px 0 0 5px; border: 1px solid #8c939b; background: #d9dce0; display: flex; align-items: center; justify-content: center; }
.tabsel-i { width: 13px; height: 13px; background: #eef0f2; border: 1px solid #8c939b; }
.hruler-cell { padding: 5px 0 0 383px; }
.hruler { overflow: visible; }
.rn { font: 10px "Noto Sans", sans-serif; fill: #4a4f55; }
.rtoggle { display: flex; flex-direction: column; align-items: center; background: #dde1e8; }
.splitbox { width: 12px; height: 2px; background: #9aa1a8; margin: 5px 0 3px; }
.sbtn { width: 15px; height: 15px; border: 1px solid #9199a2; background: linear-gradient(#f6f7f9, #dfe2e6); display: flex; align-items: center; justify-content: center; flex: none; }
.rt-i { width: 10px; height: 10px; }
.vruler { padding-left: 5px; }
.vr { border-left: 1px solid #8c939b; border-right: 1px solid #8c939b; width: 15px; height: 846px; }
.docarea { overflow: hidden; position: relative; }
.page { width: 1108px; height: 846px; margin-left: 384px; background: #fff; padding: 0 106px; box-shadow: 0 0 6px rgba(60,65,70,.45); font-family: "Liberation Serif", serif; font-size: 16.800px; line-height: 19.400px; letter-spacing: .23px; color: #000; overflow: hidden; }
.ln { white-space: pre-wrap; }
.ln:first-child { margin-top: -11px; }
mark { background: #ff0; color: #000; }
.ind { padding-left: 66px; }
.para { text-indent: 66px; text-align: justify; white-space: normal; }
.caption { padding-left: 305px; margin-top: -6px; color: #000; position: relative; }
.blank { height: 18.500px; }

.diagram { position: relative; height: 335px; letter-spacing: 0; }
.dg-lines { position: absolute; left: 0; top: 0; }
.node { position: absolute; display: flex; flex-direction: column; align-items: center; justify-content: center; background: #fff; border: 1.500px solid #a9c1e0; border-radius: 6px; font-family: "Lato", "Open Sans", sans-serif; color: #000; white-space: nowrap; }
.node em { font-style: normal; color: #f00; }
.big { font-size: 21px; line-height: 29px; }
.small { font-size: 17.500px; line-height: 24px; }
.n-ops { left: 204px; top: 5px; width: 105px; height: 35px; }
.n-un { left: 127px; top: 64px; width: 97px; height: 59px; }
.n-bin { left: 378px; top: 64px; width: 108px; height: 59px; }
.n-pre { left: 12px; top: 166px; width: 160px; height: 58px; }
.n-post { left: 179px; top: 166px; width: 160px; height: 58px; }
.n-in { left: 346px; top: 166px; width: 172px; height: 58px; }
.n-ex { left: 0; top: 262px; width: 161px; height: 63px; }

.fig { margin: -7px 0 0 64px; width: 393px; height: 344px; position: relative; }
.fig-svg { overflow: visible; }
.fr-out { fill: rgba(214,214,214,.62); stroke: rgba(190,190,190,.7); stroke-width: 1; }
.fr-in { fill: #fff; stroke: #b4b4b4; stroke-width: 1; }
.handles { fill: #9a9a9a; }
.wedge { fill: none; stroke: #7f9bc4; stroke-width: 1.100; }
.cbox { fill: #fff; stroke: #7f9bc4; stroke-width: 1.200; }
.brace { fill: none; stroke: #4f81bd; stroke-width: 1.700; }
.ft { font-family: "Lato", "Open Sans", sans-serif; font-size: 22.500px; letter-spacing: -.3px; fill: #000; }
.ft-top { font-size: 23px; letter-spacing: 0; }
.pre { white-space: pre; }

/* status bar */
.statusbar { height: 23px; display: flex; align-items: center; background: linear-gradient(#e8ebee, #d3d7dc); border-top: 1px solid #9ba2a9; color: #5a6068; font-size: 10.500px; }
.sb-item { height: 22px; line-height: 21px; border-right: 1px solid #aab0b7; box-shadow: 1px 0 0 #f4f5f6; padding-left: 8px; white-space: nowrap; }
.s-a { width: 111px; }
.s-b { width: 111px; padding-left: 10px; }
.s-c { width: 117px; padding-left: 10px; }
.vbtn { width: 18px; height: 19px; display: flex; align-items: center; justify-content: center; margin-right: 0; flex: none; }
.vbtn.on { background: linear-gradient(#ffe9a6, #fdd56e); border: 1px solid #d9a83c; border-radius: 2px; margin-right: 1px; }
.vbtn .ic-al { width: 12px; height: 11px; }
.vbtn .ic16 { width: 14px; height: 14px; }
.zoompct { width: 40px; margin-left: 10px; text-align: center; font-size: 11px; }
.zbtn { width: 15px; height: 15px; border-radius: 50%; border: 1px solid #8b929a; background: linear-gradient(#fff, #dfe2e6); font: bold 14px/12px "Liberation Sans", sans-serif; text-align: center; color: #444; flex: none; margin-left: 2px; }
.zplus { margin-right: 4px; }
.zslider { width: 96px; height: 2px; background: #a8aeb5; position: relative; margin: 0 0 0 2px; }
.zthumb { position: absolute; left: 50px; top: -7px; width: 9px; height: 14px; background: linear-gradient(#fff, #dfe2e6); border: 1px solid #8b929a; clip-path: polygon(0 0, 100% 0, 100% 65%, 50% 100%, 0 65%); }

/* scrollbar */
.scrollbar { display: flex; flex-direction: column; align-items: center; padding-bottom: 2px; background: #dde1e8; }
.sb-track { flex: 1; width: 15px; position: relative; }
.sb-thumb { position: absolute; left: 0; top: 147px; width: 15px; height: 35px; background: linear-gradient(90deg, #fafbfc, #e4e7ea); border: 1px solid #8c939b; border-radius: 2px; display: flex; flex-direction: column; align-items: center; justify-content: center; gap: 1px; }
.sb-thumb i { display: block; width: 8px; height: 1px; background: #808890; }
.sb-ar { border-width: 5px; border-top-width: 5px; border-bottom-width: 0; border-top-color: #4a4f55; }
.sb-nav { width: 11px; height: 11px; margin-top: 2px; }
.sb-dot { width: 8px; height: 8px; border-radius: 50%; border: 1px solid #7a8088; margin-top: 6px; background: #dde1e8; }
.sb-dot + .sb-nav { margin-top: 6px; }

/* taskbar */
.taskbar { height: 50px; background: #d4d0c8; border-top: 1px solid #fff; position: relative; font-family: "Noto Sans", sans-serif; }
.task-top { height: 26px; display: flex; align-items: center; padding: 2px 0 0 2px; }
.startbtn { width: 51px; height: 22px; padding: 0 0 0 1px; display: flex; align-items: center; gap: 1px; background: #d4d0c8; border: 1px solid; border-color: #fff #404040 #404040 #fff; font: bold 11.500px "Noto Sans", sans-serif; color: #000; }
.quick { display: flex; gap: 7px; margin-left: 9px; }
.task-btns { display: flex; gap: 3px; padding-left: 58px; margin-top: -1px; }
.tbtn { width: 160px; height: 23px; display: flex; align-items: center; gap: 4px; padding: 0 4px; background: #d4d0c8; border: 1px solid; border-color: #fff #404040 #404040 #fff; font: 11px "Noto Sans", sans-serif; color: #111; white-space: nowrap; overflow: hidden; }
.tbtn.act { font-weight: bold; background: repeating-conic-gradient(#fff 0 25%, #e4e1dc 0 50%) 0 0 / 2px 2px; border-color: #404040 #fff #fff #404040; }
.wordlogo.small { flex: none; margin: 0; width: 16px; height: 16px; font-size: 12px; line-height: 14px; }
.lang { position: absolute; left: 1768px; top: 5px; width: 12px; height: 16px; background: #0a246a; color: #fff; font-size: 9px; line-height: 16px; text-align: center; }
.tray { position: absolute; left: 1784px; top: 1px; width: 134px; height: 46px; display: flex; align-items: center; border: 1px solid; border-color: #808080 #fff #fff #808080; color: #000; }
.chev { width: 18px; margin-left: 3px; font: bold 14px "Liberation Sans", sans-serif; }
.tray-ic { width: 36px; display: flex; flex-wrap: wrap; gap: 1px 2px; }
.redc { width: 16px; height: 16px; background: #d5232a; color: #fff; font: bold 11px/16px "Liberation Sans", sans-serif; text-align: center; border: 1px solid #6d1014; }
.clock { flex: 1; display: flex; flex-direction: column; align-items: center; gap: 5px; font-size: 11px; line-height: 15px; padding-left: 8px; }
```
